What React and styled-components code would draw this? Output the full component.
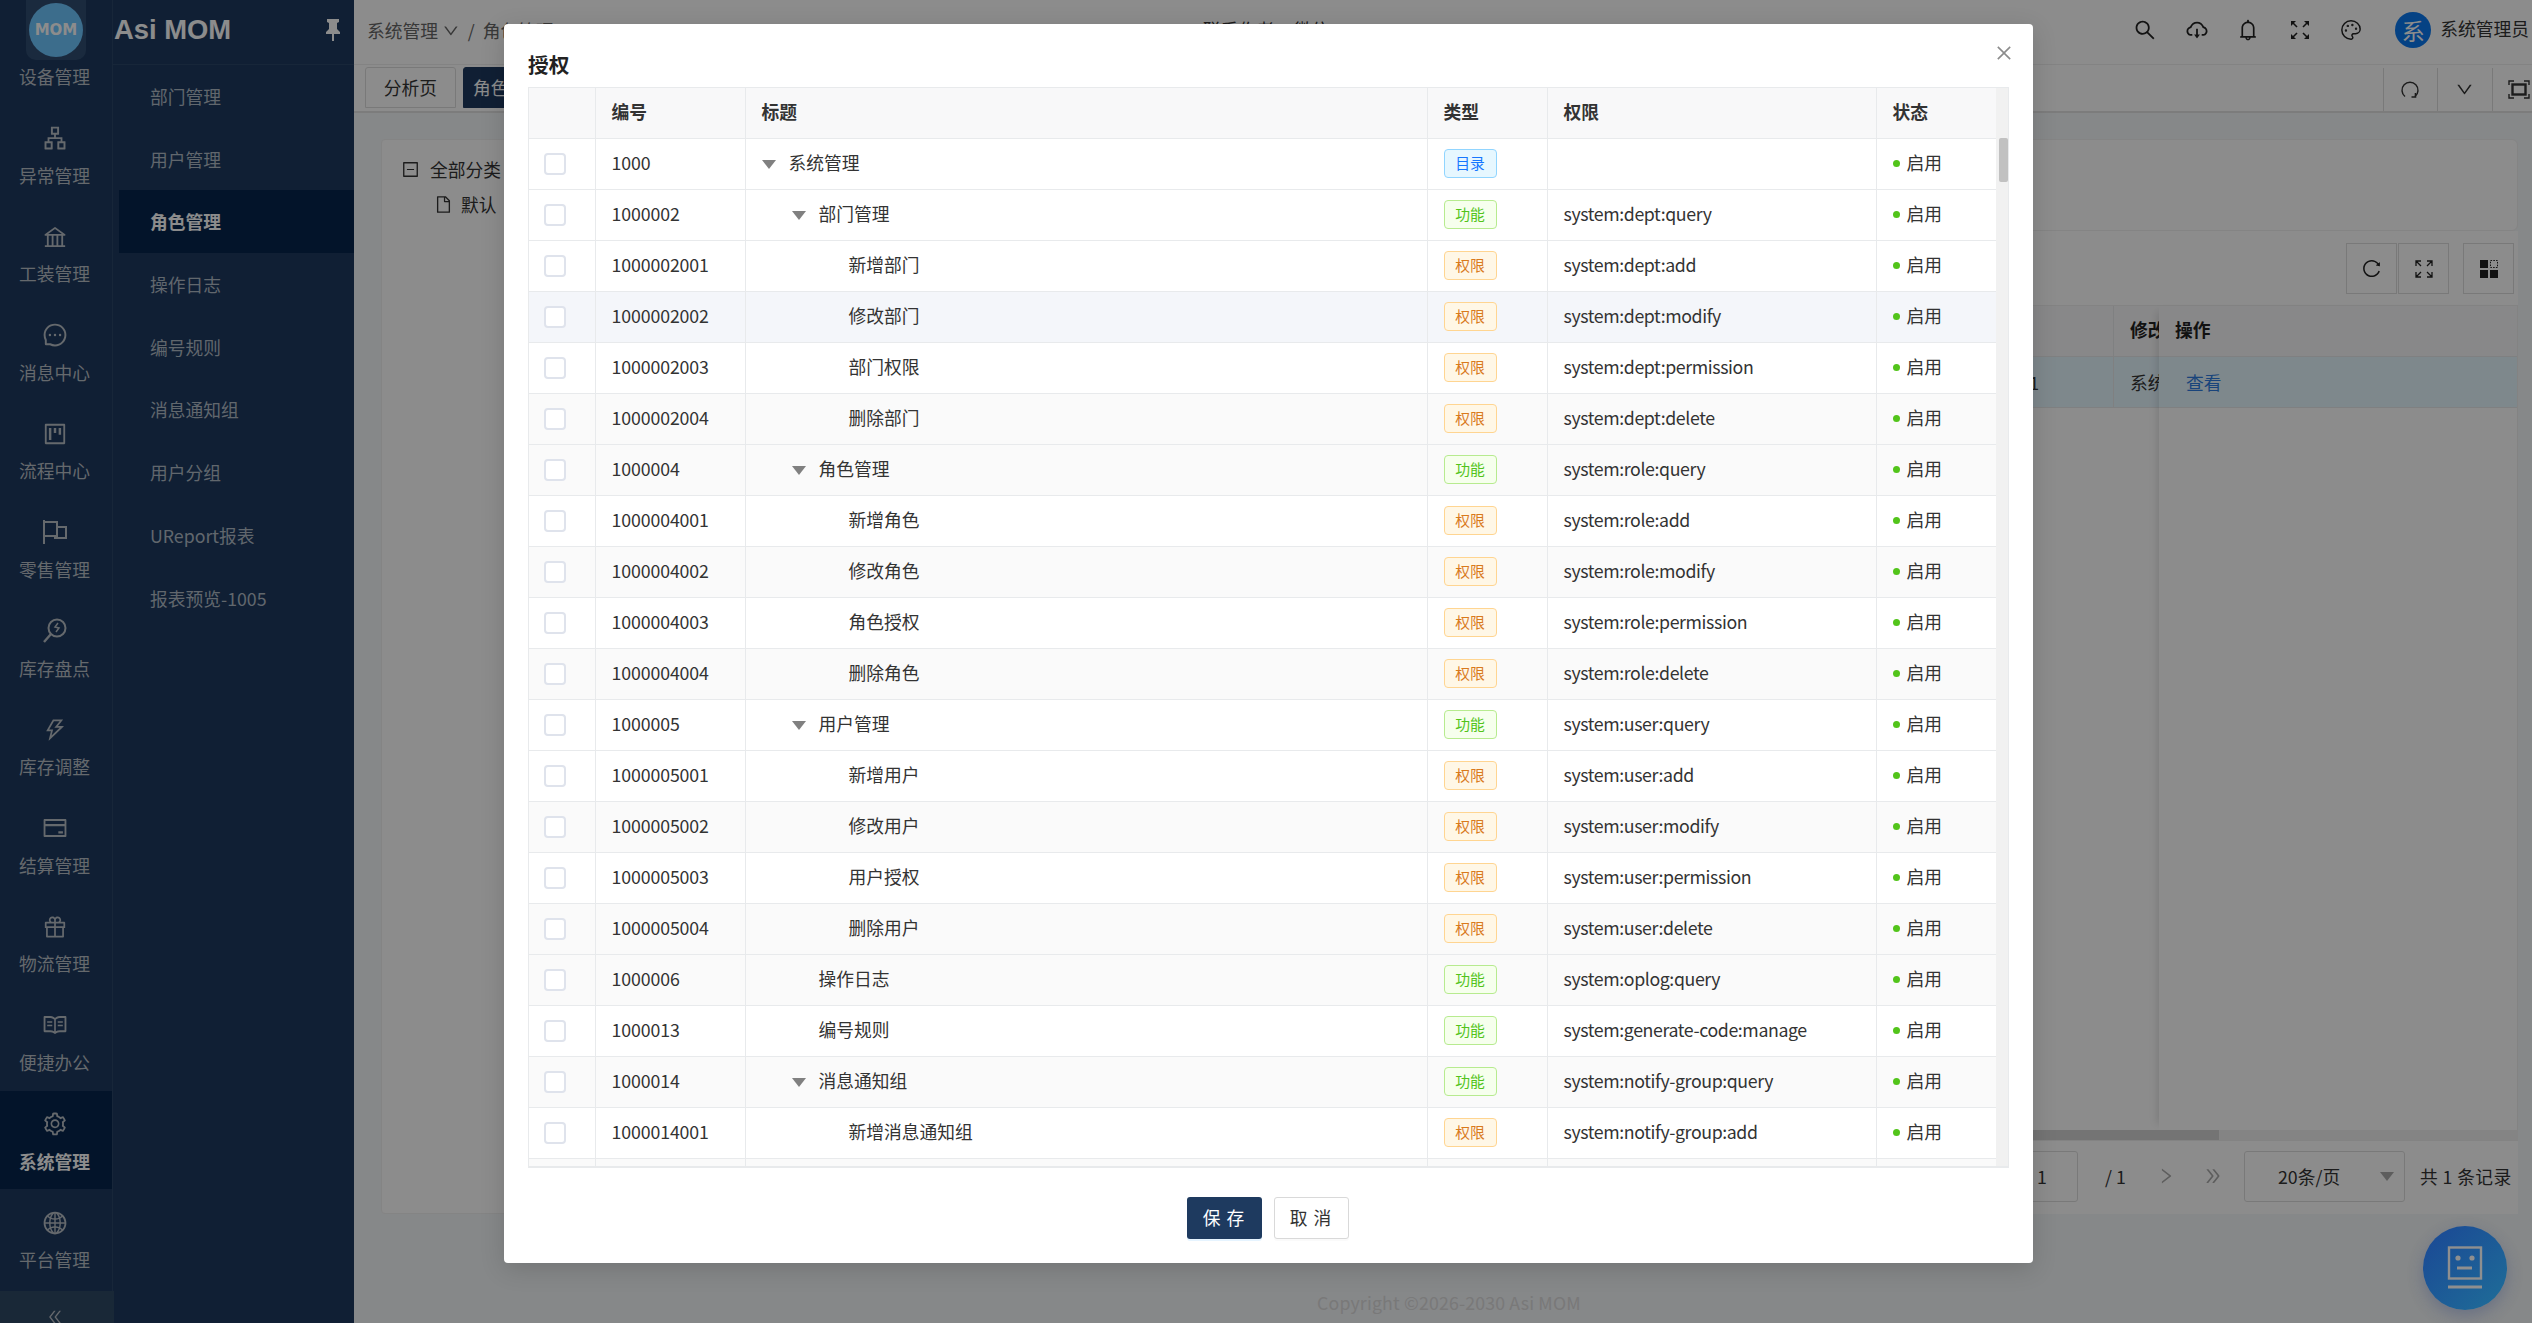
import React from "react";
import styled, { createGlobalStyle } from "styled-components";
import {
  AiOutlineApartment,
  AiOutlineBank,
  AiOutlineMessage,
  AiOutlineProject,
  AiOutlineThunderbolt,
  AiOutlineCreditCard,
  AiOutlineGift,
  AiOutlineRead,
  AiOutlineSetting,
  AiOutlineGlobal,
  AiOutlineSearch,
  AiOutlineCloudDownload,
  AiOutlineBell,
  AiOutlineClose,
  AiOutlineDown,
  AiOutlineMinusSquare,
  AiOutlineFile,
  AiOutlineDoubleLeft,
  AiOutlineRight,
  AiOutlineDoubleRight,
  AiOutlineReload,
} from "react-icons/ai";
import { Palette } from "lucide-react";

const GlobalStyle = createGlobalStyle`
  html, body {
    margin: 0;
    padding: 0;
    height: 100%;
    overflow: hidden;
    font-family: "Noto Sans CJK SC", "Open Sans", sans-serif;
    font-size: 17.76px;
    color: #222;
  }
  * { box-sizing: border-box; }
`;

// 零售管理
const RetailIcon = () => (
  <svg width="26" height="26" viewBox="0 0 26 26" fill="none" stroke="currentColor" strokeWidth="2">
    <path d="M2 25V1M2 3h13v14H2M15 8h9v11H13v-2" />
  </svg>
);

// 库存盘点
const CountIcon = () => (
  <svg width="26" height="26" viewBox="0 0 26 26" fill="none" stroke="currentColor" strokeWidth="2">
    <circle cx="15" cy="10" r="8.5" />
    <path d="M9 16l-7 8" strokeWidth="2.4" />
    <path d="M16 5l-3 4 4 1-3 4" strokeWidth="1.5" />
  </svg>
);

const FourArrows = () => (
  <svg width="18" height="18" viewBox="0 0 18 18" fill="currentColor" stroke="currentColor" strokeWidth="1.6">
    <path d="M6 6L2 2" /><path d="M12 6l4-4" /><path d="M6 12l-4 4" /><path d="M12 12l4 4" />
    <path d="M0 0h5L0 5z" stroke="none" /><path d="M18 0h-5l5 5z" stroke="none" />
    <path d="M0 18h5l-5-5z" stroke="none" /><path d="M18 18h-5l5-5z" stroke="none" />
  </svg>
);

const PinIcon = () => (
  <svg width="14" height="22" viewBox="0 0 14 22" fill="currentColor">
    <path d="M1 0h12v3l-2 1v6l3 3v2H8v7H6v-7H0v-2l3-3V4L1 3z" />
  </svg>
);

const TabReload = () => (
  <svg width="18" height="18" viewBox="0 0 18 18" fill="none" stroke="currentColor" strokeWidth="1.4">
    <path d="M4 15.5A8 8 0 1 1 14 15.5" />
    <path d="M14.5 12v4h-4" strokeWidth="1.6" />
  </svg>
);

const FocusIcon = () => (
  <svg width="22" height="19" viewBox="0 0 22 19" fill="none" stroke="currentColor">
    <path d="M1 5V1h5M16 1h5v4M1 14v4h5M16 18h5v-4" strokeWidth="1.4" />
    <rect x="4.5" y="4.5" width="13" height="10" strokeWidth="2.4" />
  </svg>
);

const ArrowsOut = () => (
  <svg width="18" height="18" viewBox="0 0 18 18" fill="none" stroke="currentColor" strokeWidth="1.3">
    <path d="M1 6V1h5M1 1l5 5M12 1h5v5M17 1l-5 5M1 12v5h5M1 17l5-5M17 12v5h-5M17 17l-5-5" />
  </svg>
);

const LayoutIcon = () => (
  <svg width="18" height="18" viewBox="0 0 18 18">
    <rect x="0" y="0" width="8" height="8" fill="currentColor" />
    <rect x="10.5" y="0.5" width="7" height="7" fill="none" stroke="currentColor" strokeDasharray="1.6 1.2" />
    <rect x="0" y="10" width="8" height="8" fill="currentColor" />
    <rect x="10" y="10" width="8" height="8" fill="currentColor" />
  </svg>
);

const RobotIcon = () => (
  <svg width="36" height="44" viewBox="0 0 36 44" fill="none" stroke="#8f8f8f">
    <rect x="2" y="1.5" width="32" height="31" strokeWidth="2.4" />
    <circle cx="11" cy="12" r="2.6" fill="#8f8f8f" stroke="none" />
    <circle cx="25" cy="12" r="2.6" fill="#8f8f8f" stroke="none" />
    <path d="M10 22h15" strokeWidth="3" />
    <path d="M1 41h34" strokeWidth="3" />
  </svg>
);

const railItems = [
  { label: "设备管理", icon: <AiOutlineSetting /> },
  { label: "异常管理", icon: <AiOutlineApartment /> },
  { label: "工装管理", icon: <AiOutlineBank /> },
  { label: "消息中心", icon: <AiOutlineMessage /> },
  { label: "流程中心", icon: <AiOutlineProject /> },
  { label: "零售管理", icon: <RetailIcon /> },
  { label: "库存盘点", icon: <CountIcon /> },
  { label: "库存调整", icon: <AiOutlineThunderbolt /> },
  { label: "结算管理", icon: <AiOutlineCreditCard /> },
  { label: "物流管理", icon: <AiOutlineGift /> },
  { label: "便捷办公", icon: <AiOutlineRead /> },
  { label: "系统管理", icon: <AiOutlineSetting />, active: true },
  { label: "平台管理", icon: <AiOutlineGlobal /> },
];

const subItems = ["部门管理", "用户管理", "角色管理", "操作日志", "编号规则", "消息通知组", "用户分组", "UReport报表", "报表预览-1005"];

// level: tree depth, open: has the arrow, bg: w white / g grey / h hovered
const rows = [
  ["1000", "系统管理", 0, true, "dir", "", "w"],
  ["1000002", "部门管理", 1, true, "fn", "system:dept:query", "w"],
  ["1000002001", "新增部门", 2, false, "perm", "system:dept:add", "w"],
  ["1000002002", "修改部门", 2, false, "perm", "system:dept:modify", "h"],
  ["1000002003", "部门权限", 2, false, "perm", "system:dept:permission", "w"],
  ["1000002004", "删除部门", 2, false, "perm", "system:dept:delete", "g"],
  ["1000004", "角色管理", 1, true, "fn", "system:role:query", "g"],
  ["1000004001", "新增角色", 2, false, "perm", "system:role:add", "w"],
  ["1000004002", "修改角色", 2, false, "perm", "system:role:modify", "g"],
  ["1000004003", "角色授权", 2, false, "perm", "system:role:permission", "w"],
  ["1000004004", "删除角色", 2, false, "perm", "system:role:delete", "g"],
  ["1000005", "用户管理", 1, true, "fn", "system:user:query", "w"],
  ["1000005001", "新增用户", 2, false, "perm", "system:user:add", "w"],
  ["1000005002", "修改用户", 2, false, "perm", "system:user:modify", "g"],
  ["1000005003", "用户授权", 2, false, "perm", "system:user:permission", "w"],
  ["1000005004", "删除用户", 2, false, "perm", "system:user:delete", "g"],
  ["1000006", "操作日志", 1, false, "fn", "system:oplog:query", "g"],
  ["1000013", "编号规则", 1, false, "fn", "system:generate-code:manage", "w"],
  ["1000014", "消息通知组", 1, true, "fn", "system:notify-group:query", "g"],
  ["1000014001", "新增消息通知组", 2, false, "perm", "system:notify-group:add", "w"],
  ["1000014002", "修改消息通知组", 2, false, "perm", "system:notify-group:modify", "g"],
];

const tagNames = { dir: "目录", fn: "功能", perm: "权限" };

export default function App() {
  return (
    <>
      <GlobalStyle />
      <Page>
        <Rail>
          <LogoTile>
            <LogoCircle>MOM</LogoCircle>
          </LogoTile>
          {railItems.map((item) => (
            <RailItem key={item.label} $active={item.active}>
              <RailIcon>{item.icon}</RailIcon>
              <span>{item.label}</span>
            </RailItem>
          ))}
          <CollapseBar>
            <AiOutlineDoubleLeft />
          </CollapseBar>
        </Rail>

        <SubPanel>
          <Brand>
            <BrandName>Asi MOM</BrandName>
            <PinIcon />
          </Brand>
          <SubList>
            {subItems.map((name) => (
              <SubItem key={name} $active={name === "角色管理"}>
                {name}
              </SubItem>
            ))}
          </SubList>
        </SubPanel>

        <Main>
          <Header>
            <Crumbs>
              系统管理 <AiOutlineDown /> <CrumbSlash>/</CrumbSlash> 角色管理
            </Crumbs>
            <HeaderNote>联系作者 &nbsp; &nbsp; 微信</HeaderNote>
            <HeaderTools>
              <HeaderIcon><AiOutlineSearch /></HeaderIcon>
              <HeaderIcon><AiOutlineCloudDownload /></HeaderIcon>
              <HeaderIcon><AiOutlineBell /></HeaderIcon>
              <HeaderIcon><FourArrows /></HeaderIcon>
              <HeaderIcon><Palette size={22} strokeWidth={1.6} /></HeaderIcon>
              <Avatar>系</Avatar>
              <UserName>系统管理员</UserName>
            </HeaderTools>
          </Header>

          <TabBar>
            <Tab>分析页</Tab>
            <Tab $active>角色管理</Tab>
            <TabTools>
              <TabTool><TabReload /></TabTool>
              <TabTool><AiOutlineDown /></TabTool>
              <TabTool><FocusIcon /></TabTool>
            </TabTools>
          </TabBar>

          <Content>
            <TreeCard>
              <TreeRow>
                <AiOutlineMinusSquare />
                全部分类
              </TreeRow>
              <TreeChild>
                <AiOutlineFile />
                默认
              </TreeChild>
            </TreeCard>
            <RightColumn>
              <SearchCard />
              <TablePanel>
                <GridToolbar>
                  <ToolBox><AiOutlineReload /></ToolBox>
                  <ToolBox><ArrowsOut /></ToolBox>
                  <ToolBox $gap><LayoutIcon /></ToolBox>
                </GridToolbar>
                <GridWrap>
                  <GridHead>
                    <GridFill />
                    <GridCell>修改人</GridCell>
                  </GridHead>
                  <GridRow>
                    <GridFill>2026-01-01 10:00:01</GridFill>
                    <GridCell>系统管理员</GridCell>
                  </GridRow>
                  <FixedColumn>
                    <FixedHead>操作</FixedHead>
                    <FixedRow><ViewLink>查看</ViewLink></FixedRow>
                  </FixedColumn>
                </GridWrap>
                <HScroll>
                  <HThumb />
                </HScroll>
                <Pager>
                  <PageInput>1</PageInput>
                  <PageTotal>/ 1</PageTotal>
                  <PageArrow><AiOutlineRight /></PageArrow>
                  <PageArrow><AiOutlineDoubleRight /></PageArrow>
                  <SizeSelect>
                    20条/页
                    <SizeCaret />
                  </SizeSelect>
                  <PageCount>共 1 条记录</PageCount>
                </Pager>
              </TablePanel>
            </RightColumn>
          </Content>
          <Footer>Copyright ©2026-2030 Asi MOM</Footer>
        </Main>

        <Overlay />

        <Modal>
          <CloseButton><AiOutlineClose /></CloseButton>
          <ModalTitle>授权</ModalTitle>
          <TableFrame>
            <TableScroll>
              <AuthTable>
                <colgroup>
                  <col width="66" />
                  <col width="150" />
                  <col width="682" />
                  <col width="120" />
                  <col width="329" />
                  <col width="121" />
                </colgroup>
                <thead>
                  <tr>
                    <HeadCell />
                    <HeadCell>编号</HeadCell>
                    <HeadCell>标题</HeadCell>
                    <HeadCell>类型</HeadCell>
                    <HeadCell>权限</HeadCell>
                    <HeadCell>状态</HeadCell>
                  </tr>
                </thead>
                <tbody>
                  {rows.map(([id, title, level, open, type, perm, bg]) => (
                    <BodyRow key={id} $bg={bg}>
                      <FlatCell $left="15px"><CheckBox /></FlatCell>
                      <IdCell>{id}</IdCell>
                      <BodyCell>
                        <TitleWrap $level={level} $open={open}>
                          {open && <TreeArrow />}
                          {title}
                        </TitleWrap>
                      </BodyCell>
                      <FlatCell $left="16px"><Tag $type={type}>{tagNames[type]}</Tag></FlatCell>
                      <PermCell>{perm}</PermCell>
                      <BodyCell>
                        <StatusWrap><StatusDot />启用</StatusWrap>
                      </BodyCell>
                    </BodyRow>
                  ))}
                </tbody>
              </AuthTable>
            </TableScroll>
            <VScroll>
              <VThumb />
            </VScroll>
          </TableFrame>
          <ModalFooter>
            <PrimaryButton>保 存</PrimaryButton>
            <GhostButton>取 消</GhostButton>
          </ModalFooter>
        </Modal>

        <BotButton>
          <RobotIcon />
        </BotButton>
      </Page>
    </>
  );
}

const Page = styled.div`
  position: relative;
  display: flex;
  width: 2532px;
  height: 1323px;
  overflow: hidden;
  background: #f5f7fa;
`;

const Rail = styled.div`
  position: relative;
  display: flex;
  flex-direction: column;
  flex: 0 0 113px;
  padding-top: 6px;
  background: #1e3a5f;
  border-right: 1px solid #2a4669;
`;
const LogoTile = styled.div`
  position: absolute;
  z-index: 1;
  top: 0;
  left: 26px;
  width: 60px;
  height: 60px;
  display: flex;
  align-items: center;
  justify-content: center;
  border-radius: 0 0 10px 10px;
  background: #314e72;
`;
const LogoCircle = styled.div`
  width: 54px;
  height: 54px;
  border-radius: 50%;
  background: #6dc6ff;
  color: #fff;
  font-family: "DejaVu Sans", sans-serif;
  font-weight: 700;
  font-size: 15px;
  line-height: 54px;
  text-align: center;
`;
const RailItem = styled.div`
  flex: 0 0 98.6px;
  display: flex;
  flex-direction: column;
  align-items: center;
  padding: 20.5px 3px 0 0;
  gap: 11.5px;
  color: ${(p) => (p.$active ? "#fff" : "#b9bfc6")};
  font-weight: ${(p) => (p.$active ? 700 : 400)};
  background: ${(p) => (p.$active ? "#07264e" : "transparent")};
  line-height: 24px;
  white-space: nowrap;
`;
const RailIcon = styled.div`
  width: 26px;
  height: 26px;
  font-size: 32px;
  display: flex;
  align-items: center;
  justify-content: center;
  color: #b9bfc6;
`;
const CollapseBar = styled.div`
  position: absolute;
  z-index: 1;
  left: 0;
  right: -2px;
  bottom: 0;
  height: 32px;
  display: flex;
  justify-content: center;
  padding: 17px 4px 0 0;
  font-size: 18px;
  background: #2f4965;
  color: #b9bfc6;
  overflow: hidden;
`;

const SubPanel = styled.div`
  flex: 0 0 241px;
  display: flex;
  flex-direction: column;
  background: #1e3a5f;
`;
const Brand = styled.div`
  height: 65px;
  display: flex;
  align-items: center;
  justify-content: space-between;
  padding: 0 14px 4px 1px;
  color: #fff;
  border-bottom: 1px solid #2a4669;
`;
const BrandName = styled.div`
  font-family: "Liberation Sans", sans-serif;
  font-weight: 700;
  font-size: 27.4px;
  color: #fff;
`;
const SubList = styled.div`
  padding-left: 6px;
`;
const SubItem = styled.div`
  height: 62.7px;
  line-height: 62.7px;
  padding-left: 31px;
  white-space: nowrap;
  color: ${(p) => (p.$active ? "#fff" : "#b1bcc7")};
  font-weight: ${(p) => (p.$active ? 700 : 400)};
  background: ${(p) => (p.$active ? "#07264e" : "transparent")};
`;

const Main = styled.div`
  position: relative;
  flex: 1;
  min-width: 0;
  display: flex;
  flex-direction: column;
`;
const Header = styled.div`
  position: relative;
  height: 65px;
  display: flex;
  align-items: center;
  padding: 0 3px 5px 13px;
  background: #fff;
  border-bottom: 1px solid #eee;
  svg { vertical-align: -2px; }
`;
const Crumbs = styled.div`
  color: #666;
  white-space: nowrap;
  font-size: 17.76px;
`;
const CrumbSlash = styled.span`
  margin: 0 4px;
`;
const HeaderNote = styled.div`
  position: absolute;
  left: 849px;
  top: 16px;
  color: #333;
  white-space: nowrap;
`;
const HeaderTools = styled.div`
  margin-left: auto;
  display: flex;
  align-items: center;
`;
const HeaderIcon = styled.div`
  width: 51.6px;
  display: flex;
  justify-content: center;
  font-size: 24px;
  color: #222;
`;
const Avatar = styled.div`
  width: 36px;
  height: 36px;
  margin-left: 18px;
  border-radius: 50%;
  background: #0a78f0;
  color: #fff;
  text-align: center;
  line-height: 36px;
  font-size: 23px;
`;
const UserName = styled.div`
  margin: 0 0 3px 9px;
  color: #333;
  white-space: nowrap;
`;

const TabBar = styled.div`
  height: 48px;
  display: flex;
  align-items: flex-end;
  gap: 7px;
  padding: 0 0 3px 11px;
  background: #fff;
  border-bottom: 2px solid #e2e2e2;
`;
const Tab = styled.div`
  width: 91px;
  height: 41px;
  line-height: 39px;
  text-align: center;
  border-radius: 3px 3px 0 0;
  white-space: nowrap;
  overflow: hidden;
  border: 1px solid ${(p) => (p.$active ? "#1e3a5f" : "#ddd")};
  background: ${(p) => (p.$active ? "#1e3a5f" : "#fff")};
  color: ${(p) => (p.$active ? "#fff" : "#333")};
`;
const TabTools = styled.div`
  margin-left: auto;
  margin-right: -14px;
  display: flex;
  align-self: stretch;
  margin-top: 3px;
  margin-bottom: -3px;
`;
const TabTool = styled.div`
  width: 54.5px;
  display: flex;
  align-items: center;
  justify-content: center;
  font-size: 19px;
  color: #333;
  border-left: 1px solid #ddd;
`;

const Content = styled.div`
  flex: 1;
  display: flex;
  gap: 14px;
  padding: 26px 14px 0 27px;
  min-height: 0;
`;
const TreeCard = styled.div`
  flex: 0 0 320px;
  height: 1075px;
  padding: 16px 0 0 21px;
  background: #fff;
  border: 1px solid #f0f0f0;
  border-radius: 4px;
`;
const TreeRow = styled.div`
  display: flex;
  align-items: center;
  gap: 10px;
  height: 26px;
  color: #333;
  svg { font-size: 19px; margin-left: -2px; }
`;
const TreeChild = styled(TreeRow)`
  margin-top: 9px;
  padding-left: 33px;
  gap: 8px;
`;
const RightColumn = styled.div`
  flex: 1;
  min-width: 0;
  display: flex;
  flex-direction: column;
`;
const SearchCard = styled.div`
  height: 92px;
  background: #fff;
  border: 1px solid #f0f0f0;
  border-radius: 6px;
`;
const TablePanel = styled.div`
  height: 983px;
  display: flex;
  flex-direction: column;
  background: #fff;
`;
const GridToolbar = styled.div`
  height: 74px;
  display: flex;
  gap: 1px;
  justify-content: flex-end;
  padding: 12px 4px 0 0;
`;
const ToolBox = styled.div`
  width: 51px;
  height: 51px;
  display: flex;
  align-items: center;
  justify-content: center;
  font-size: 21px;
  color: #222;
  border: 1px solid #ddd;
  margin-left: ${(p) => (p.$gap ? "13px" : 0)};
`;
const GridWrap = styled.div`
  position: relative;
  height: 825px;
  border: 1px solid #eee;
  border-bottom: 0;
`;
const GridHead = styled.div`
  display: flex;
  height: 51px;
  line-height: 47px;
  font-weight: 700;
  background: #f8f8f9;
  border-bottom: 1px solid #e8eaec;
`;
const GridRow = styled(GridHead)`
  font-weight: 400;
  line-height: 50px;
  background: #e6f7ff;
  color: #333;
`;
const GridFill = styled.div`
  flex: 1;
  min-width: 0;
  text-align: right;
  padding-right: 74px;
  white-space: nowrap;
  border-right: 1px solid #e8eaec;
`;
const GridCell = styled.div`
  flex: 0 0 403px;
  padding-left: 16px;
  white-space: nowrap;
`;
const FixedColumn = styled.div`
  position: absolute;
  top: 0;
  right: 0;
  bottom: 0;
  width: 358px;
  background: #fff;
  box-shadow: -8px 0 8px -6px rgba(0, 0, 0, 0.12);
`;
const FixedHead = styled(GridHead)`
  padding-left: 16px;
`;
const FixedRow = styled(GridRow)`
  padding-left: 27px;
`;
const ViewLink = styled.span`
  color: #2f7de1;
`;
const HScroll = styled.div`
  height: 11px;
  background: #f1f1f1;
  border-bottom: 1px solid #eee;
`;
const HThumb = styled.div`
  width: 83.4%;
  height: 100%;
  background: #d4d4d4;
`;
const Pager = styled.div`
  display: flex;
  align-items: center;
  justify-content: flex-end;
  height: 72px;
  padding-bottom: 2px;
  color: #333;
`;
const PageInput = styled.div`
  width: 80px;
  height: 51px;
  line-height: 49px;
  padding-left: 38px;
  border: 1px solid #ddd;
  border-radius: 3px;
`;
const PageTotal = styled.div`
  margin-left: 27px;
  width: 37px;
`;
const PageArrow = styled.div`
  width: 47px;
  display: flex;
  justify-content: center;
  color: #aaa;
  font-size: 20px;
`;
const SizeSelect = styled.div`
  position: relative;
  width: 161px;
  height: 51px;
  line-height: 49px;
  margin-left: 8px;
  padding-left: 33px;
  border: 1px solid #ddd;
  border-radius: 3px;
`;
const SizeCaret = styled.div`
  position: absolute;
  right: 10px;
  top: 20px;
  border-left: 7px solid transparent;
  border-right: 7px solid transparent;
  border-top: 9px solid #aaa;
`;
const PageCount = styled.div`
  width: 113px;
  padding-left: 15px;
  letter-spacing: 0.4px;
  white-space: nowrap;
`;
const Footer = styled.div`
  position: absolute;
  left: 963px;
  top: 1289px;
  color: #dcdcdc;
  letter-spacing: 0.15px;
  white-space: nowrap;
  line-height: 26px;
`;

const Overlay = styled.div`
  position: absolute;
  z-index: 2;
  inset: 0;
  background: rgba(0, 0, 0, 0.45);
`;

const Modal = styled.div`
  position: absolute;
  z-index: 3;
  left: 504px;
  top: 24px;
  width: 1529px;
  height: 1239px;
  padding: 0 24px;
  display: flex;
  flex-direction: column;
  background: #fff;
  border-radius: 4px;
  box-shadow: 0 6px 24px rgba(0, 0, 0, 0.15);
`;
const CloseButton = styled.div`
  position: absolute;
  top: 19px;
  right: 19px;
  font-size: 20px;
  line-height: 0;
  color: #8c8c8c;
`;
const ModalTitle = styled.div`
  height: 63px;
  padding-top: 25px;
  line-height: 30px;
  font-size: 20.7px;
  font-weight: 700;
  color: #222;
`;
const TableFrame = styled.div`
  display: flex;
  flex: none;
  width: 1481px;
  height: 1081px;
  border: 1px solid #e8eaec;
  border-width: 1px 1px 2px 1px;
  overflow: hidden;
`;
const TableScroll = styled.div`
  width: 1468px;
  overflow: hidden;
`;
const AuthTable = styled.table`
  width: 1468px;
  table-layout: fixed;
  border-collapse: collapse;
`;
const HeadCell = styled.th`
  height: 50px;
  padding: 0 16px 3px;
  text-align: left;
  font-weight: 700;
  color: #333;
  background: #f8f8f9;
  border-right: 1px solid #e8eaec;
  border-bottom: 1px solid #e8eaec;
`;
const BodyRow = styled.tr`
  background: ${(p) => (p.$bg === "h" ? "#f4f6fa" : p.$bg === "g" ? "#fafafa" : "#fff")};
`;
const BodyCell = styled.td`
  height: 51px;
  padding: 0 16px 3px;
  white-space: nowrap;
  color: #333;
  border-right: 1px solid #e8eaec;
  border-bottom: 1px solid #e8eaec;
`;
const FlatCell = styled(BodyCell)`
  padding: 0 0 0 ${(p) => p.$left};
`;
const IdCell = styled(BodyCell)`
  letter-spacing: -0.12px;
`;
const PermCell = styled(BodyCell)`
  letter-spacing: -0.4px;
`;
const CheckBox = styled.div`
  width: 22px;
  height: 22px;
  background: #fff;
  border: 2px solid #dfe3ec;
  border-radius: 4px;
`;
const TitleWrap = styled.div`
  display: flex;
  align-items: center;
  gap: 13px;
  margin-left: ${(p) => p.$level * 30 + (p.$open ? 0 : 27)}px;
`;
const TreeArrow = styled.div`
  flex: none;
  margin-top: 5px;
  border-left: 7px solid transparent;
  border-right: 7px solid transparent;
  border-top: 9px solid #808080;
`;
const tagColors = {
  dir: { bg: "#e6f7ff", border: "#91d5ff", color: "#1677ff" },
  fn: { bg: "#f6ffed", border: "#b7eb8f", color: "#52c41a" },
  perm: { bg: "#fff7e6", border: "#ffd591", color: "#d97a1c" },
};
const Tag = styled.span`
  display: block;
  width: 53px;
  height: 29px;
  line-height: 26px;
  text-align: center;
  font-size: 14.8px;
  border-radius: 4px;
  border: 1px solid ${(p) => tagColors[p.$type].border};
  background: ${(p) => tagColors[p.$type].bg};
  color: ${(p) => tagColors[p.$type].color};
`;
const StatusWrap = styled.div`
  display: flex;
  align-items: center;
  gap: 7px;
`;
const StatusDot = styled.span`
  width: 7px;
  height: 7px;
  margin-top: 2px;
  border-radius: 50%;
  background: #52c41a;
`;
const VScroll = styled.div`
  flex: 1;
  padding: 50px 0 0 3px;
  background: #f1f1f1;
`;
const VThumb = styled.div`
  width: 9px;
  height: 44px;
  border-radius: 2px;
  background: #c1c1c1;
`;
const ModalFooter = styled.div`
  display: flex;
  justify-content: center;
  gap: 12px;
  padding: 29px 0 0 0;
  margin-right: 2px;
`;
const PrimaryButton = styled.div`
  width: 75px;
  height: 42px;
  line-height: 40px;
  text-align: center;
  letter-spacing: 1px;
  color: #fff;
  background: #1e3a5f;
  border-radius: 3px;
  box-shadow: 0 2px 0 #e6f4ff;
  white-space: pre;
`;
const GhostButton = styled(PrimaryButton)`
  line-height: 38px;
  color: #333;
  background: #fff;
  border: 1px solid #d9d9d9;
  box-shadow: 0 2px 0 rgba(0, 0, 0, 0.02);
`;
const BotButton = styled.div`
  position: absolute;
  z-index: 3;
  left: 2423px;
  top: 1226px;
  width: 84px;
  height: 84px;
  display: flex;
  align-items: center;
  justify-content: center;
  border-radius: 50%;
  background: linear-gradient(135deg, #1a4795, #1f6e98);
  box-shadow: 0 6px 16px rgba(40, 60, 120, 0.3);
`;
